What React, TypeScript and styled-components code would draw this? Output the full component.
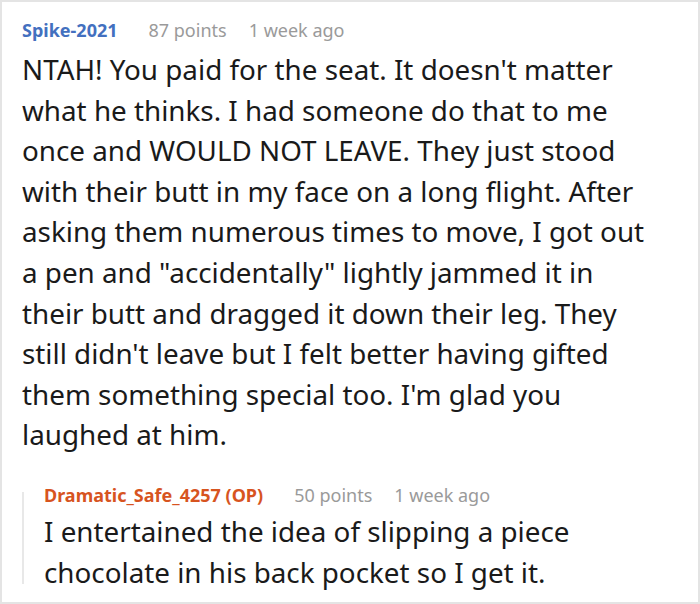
import styled, { createGlobalStyle } from 'styled-components';

const GlobalStyle = createGlobalStyle`
  html, body {
    margin: 0;
    padding: 0;
    background: #fff;
  }
  body {
    font-family: "Noto Sans", "Open Sans", sans-serif;
  }
`;

const Card = styled.div`
  box-sizing: border-box;
  width: 700px;
  height: 604px;
  border: 2px solid #e4e4e4;
  padding: 16px 36px 0 20px;
  overflow: hidden;
`;

const Meta = styled.div`
  display: flex;
  align-items: center;
  font-size: 18px;
  line-height: 24px;
  color: #9a9a9a;
  white-space: nowrap;
`;

const Author = styled.span<{ $op?: boolean }>`
  font-weight: 700;
  margin-right: 31px;
  color: ${(p) => (p.$op ? '#d7541f' : '#4370bf')};
`;

const Points = styled.span`
  margin-right: 22px;
`;

const Body = styled.p<{ $gap: number }>`
  margin: ${(p) => p.$gap}px 0 0 0;
  font-size: 27.8px;
  line-height: 40.6px;
  color: #1a1a1a;
`;

const Reply = styled.div`
  margin-top: 28px;
  padding-left: 22px;
  background: linear-gradient(#e8e8e8, #e8e8e8) no-repeat 0 9px / 2px calc(100% - 17px);
`;

type CommentProps = {
  author: string;
  op?: boolean;
  points: number;
  when: string;
  text: string;
  gap: number;
};

const Comment = ({ author, op, points, when, text, gap }: CommentProps) => (
  <div>
    <Meta>
      <Author $op={op}>{author}</Author>
      <Points>{points} points</Points>
      <span>{when}</span>
    </Meta>
    <Body $gap={gap}>{text}</Body>
  </div>
);

const App = () => (
  <>
    <GlobalStyle />
    <Card>
      <Comment
        author="Spike-2021"
        points={87}
        when="1 week ago"
        gap={7}
        text={`NTAH! You paid for the seat. It doesn't matter what he thinks. I had someone do that to me once and WOULD NOT LEAVE. They just stood with their butt in my face on a long flight. After asking them numerous times to move, I got out a pen and "accidentally" lightly jammed it in their butt and dragged it down their leg. They still didn't leave but I felt better having gifted them something special too. I'm glad you laughed at him.`}
      />
      <Reply>
        <Comment
          author="Dramatic_Safe_4257 (OP)"
          op
          points={50}
          when="1 week ago"
          gap={4}
          text="I entertained the idea of slipping a piece chocolate in his back pocket so I get it."
        />
      </Reply>
    </Card>
  </>
);

export default App;
